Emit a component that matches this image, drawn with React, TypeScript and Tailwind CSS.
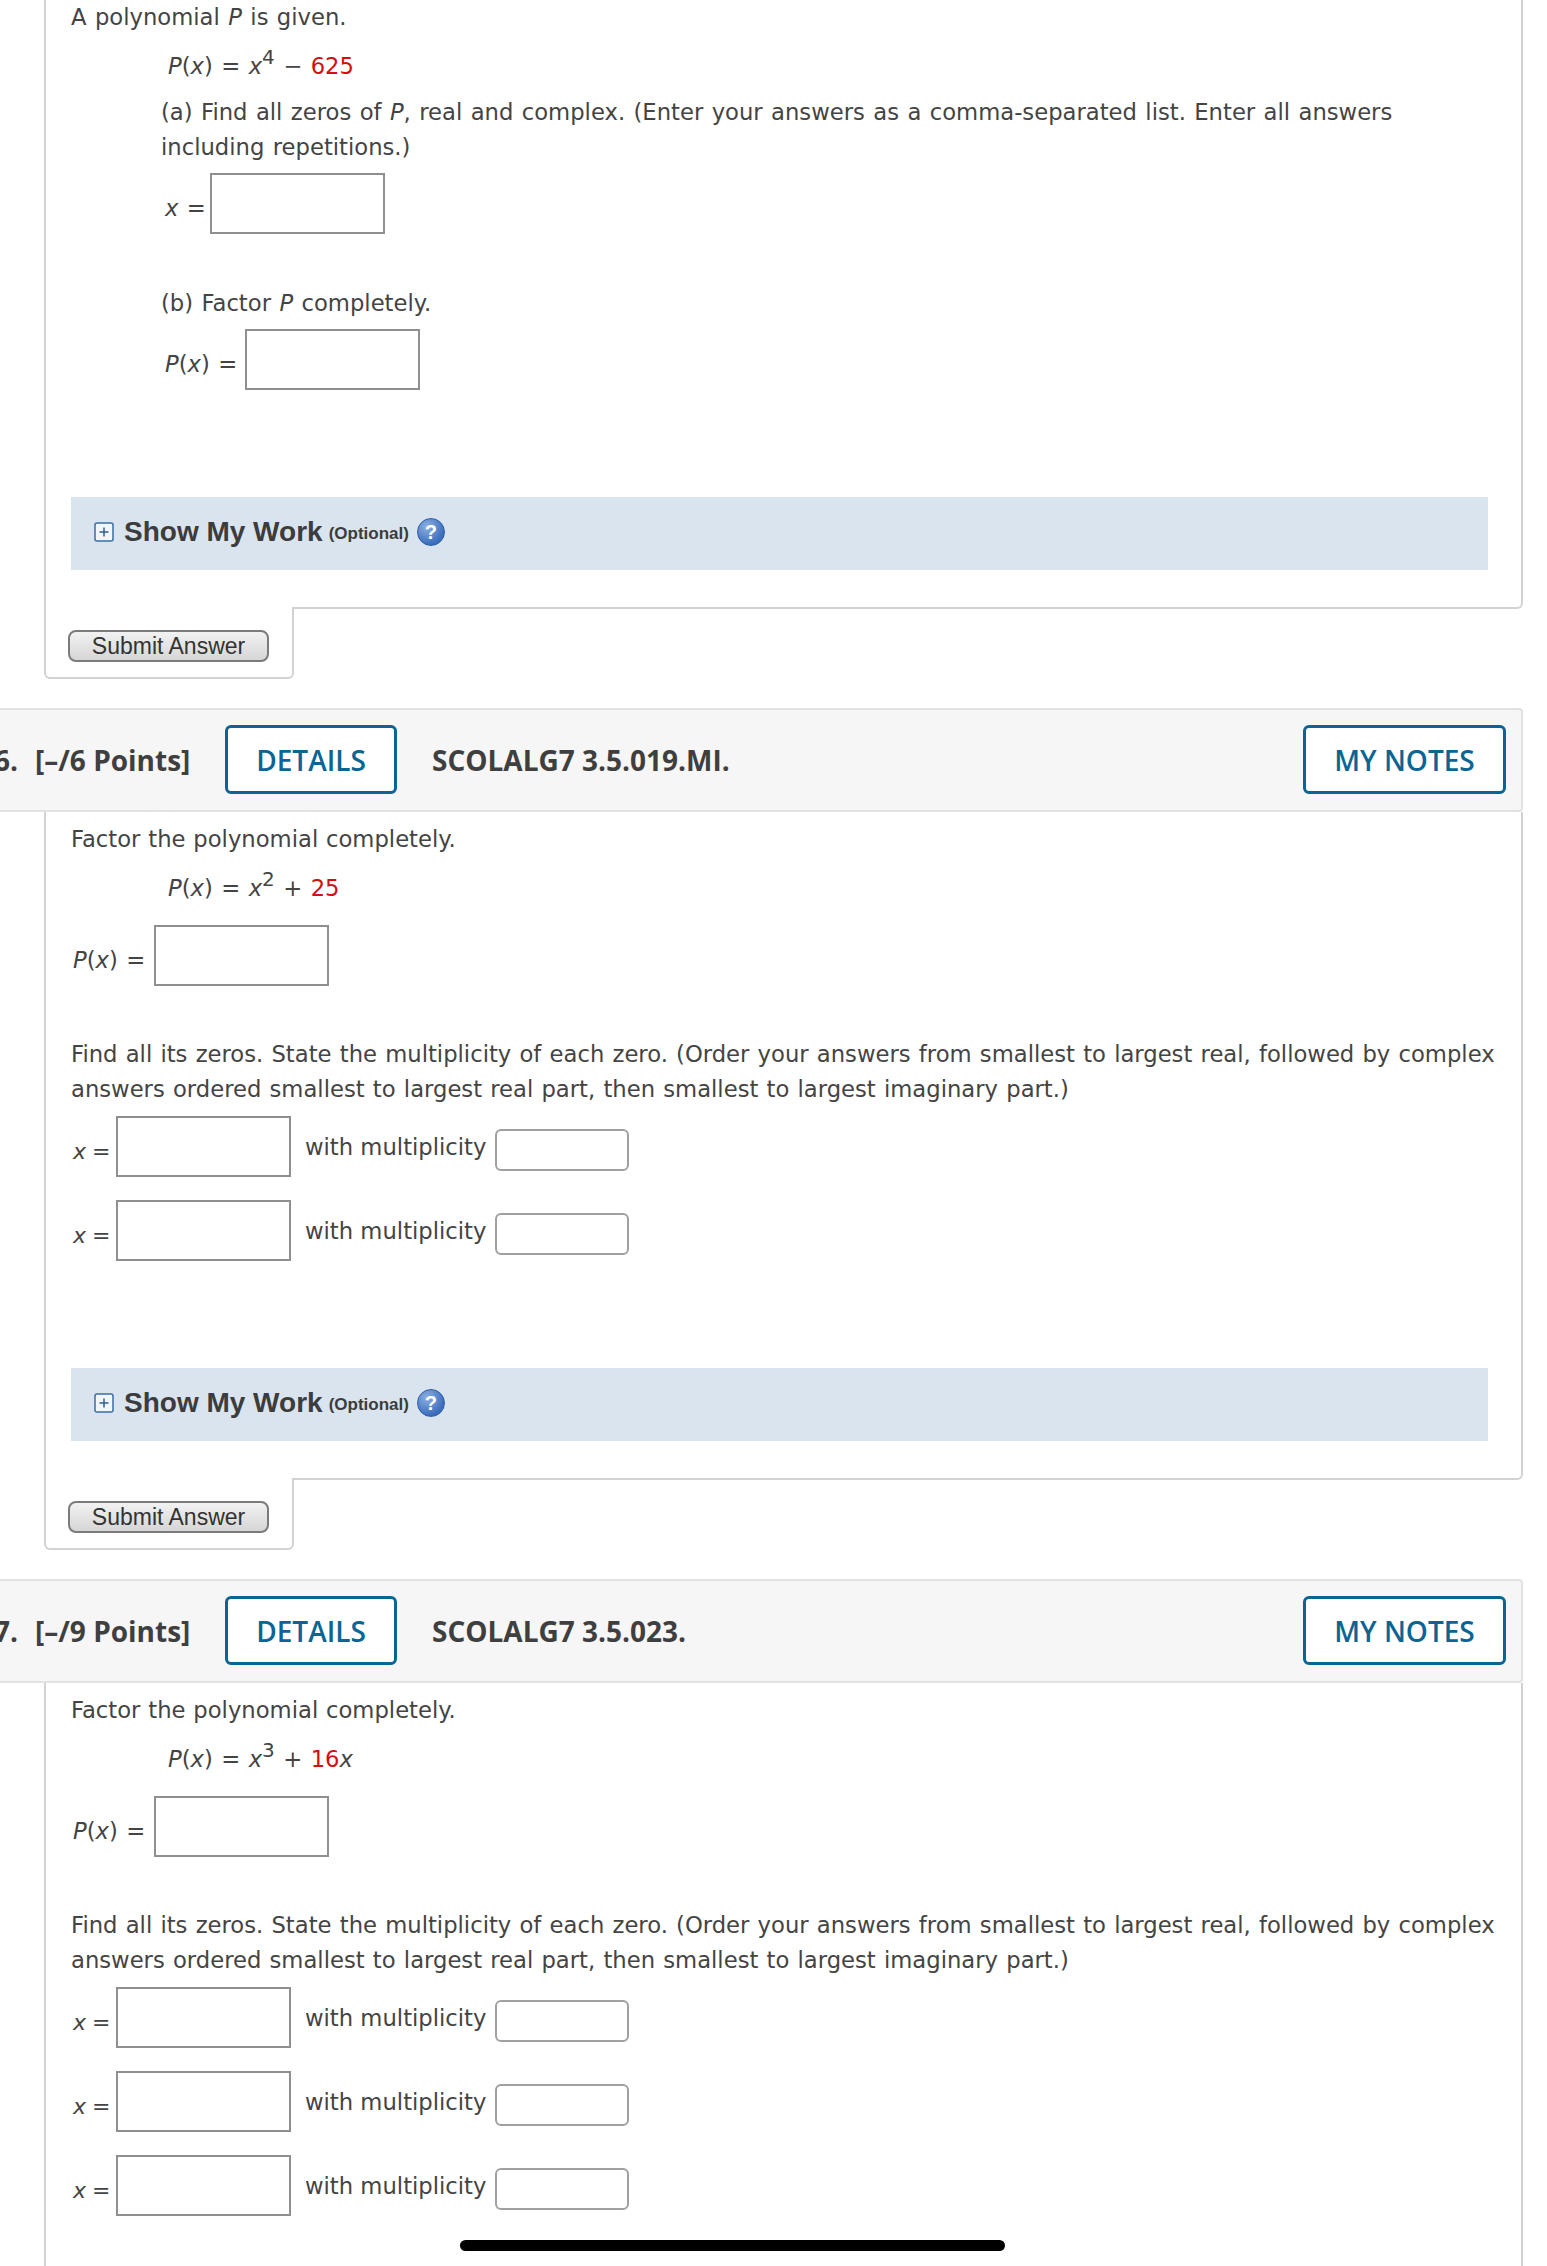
import React from "react";

const P = () => <i>P</i>;
const X = () => <i>x</i>;

function Box({ w = "w-[175px]" }: { w?: string }) {
  return <div className={`${w} h-[61px] shrink-0 border-2 border-[#8f8f8f] bg-white`} />;
}

function Answer({ className, label, w }: { className: string; label: React.ReactNode; w: string }) {
  return (
    <div className={`flex items-start ${className}`}>
      <div className={`${w} pt-[18px] leading-[35px] whitespace-pre`}>{label}</div>
      <Box />
    </div>
  );
}

function Multi({ className }: { className: string }) {
  return (
    <div className={`-ml-[2px] flex items-start ${className}`}>
      <div className="w-[47px] pl-[4px] pt-[18px] text-[22px] leading-[35px] [word-spacing:-1px]"><X /> =</div>
      <Box />
      <div className="ml-[14px] mt-[14px] w-[190px] leading-[35px] [word-spacing:0px]">with multiplicity</div>
      <div className="mt-[13px] h-[42px] w-[134px] rounded-[6px] border-2 border-[#a0a0a0] bg-white" />
    </div>
  );
}

function ShowWork({ className }: { className: string }) {
  return (
    <div className={`flex h-[73px] w-[1417px] items-center bg-[#d9e4ee] pb-[4px] pl-[23px] [word-spacing:0px] ${className}`}>
      <svg width="20" height="20" viewBox="0 0 20 20" className="shrink-0">
        <rect x="1" y="1" width="18" height="18" rx="2" fill="#f2f6fa" stroke="#3b6ea5" strokeWidth="1.5" />
        <path d="M10 5.5v9M5.5 10h9" stroke="#2f5f95" strokeWidth="1.5" />
      </svg>
      <span className="ml-[10px] font-['Liberation_Sans'] text-[28px] font-bold text-[#3c3c3c]">Show My Work</span>
      <span className="ml-[6px] mt-[5px] font-['Liberation_Sans'] text-[17px] font-bold text-[#3c3c3c]">(Optional)</span>
      <span className="ml-[8px] flex h-[28px] w-[28px] items-center justify-center rounded-full border border-[#2f5ea6] bg-[radial-gradient(circle_at_35%_30%,#8fb0e2,#3a6ebd_70%)] font-['Liberation_Sans'] text-[20px] font-bold text-white">?</span>
    </div>
  );
}

function Footer() {
  return (
    <div className="relative -mt-[2px] flex h-[72px] w-[250px] items-start rounded-b-[6px] border-x-2 border-b-2 border-[#d2d2d2] bg-white pl-[22px] pt-[23px]">
      <button className="h-[32px] w-[201px] rounded-[8px] border-2 border-[#7b7b7b] bg-gradient-to-b from-[#f2f2f2] to-[#d6d6d6] font-['Liberation_Sans'] text-[23px] leading-[26px] text-[#333]">
        Submit Answer
      </button>
    </div>
  );
}

function Header({ n, points, code, className }: { n: string; points: string; code: string; className: string }) {
  const btn = "flex h-[69px] items-center justify-center rounded-[6px] border-[3px] border-[#0b6594] bg-white text-[28px] font-semibold text-[#0b6594]";
  return (
    <div className={`flex h-[104px] w-[1523px] items-center rounded-r-[4px] border-y-2 border-r-2 border-[#e2e2e2] bg-[#f6f6f6] pb-[1px] font-['Open_Sans'] text-[#3f3f3f] [word-spacing:0px] ${className}`}>
      <span className="-ml-[6px] w-[41px] shrink-0 text-[28px] font-bold">{n}</span>
      <span className="w-[190px] shrink-0 text-[28px] font-bold">[–/{points} Points]</span>
      <div className={`${btn} w-[172px] shrink-0`}>DETAILS</div>
      <span className="ml-[35px] text-[28px] font-bold">{code}</span>
      <div className={`${btn} ml-auto mr-[15px] w-[203px]`}>MY NOTES</div>
    </div>
  );
}

export default function App() {
  return (
    <div className="relative h-[2266px] w-[1547px] overflow-hidden bg-white font-['DejaVu_Sans'] text-[22.7px] text-[#444] [word-spacing:1.2px]">
      {/* Question 5 */}
      <div className="ml-[44px] h-[609px] w-[1479px] rounded-br-[6px] border-x-2 border-b-2 border-[#d2d2d2] pl-[25px]">
        <p className="leading-[35px]">A polynomial <P /> is given.</p>
        <p className="ml-[97px] mt-[14px] leading-[35px]">
          <P />(<X />) = <X /><sup className="text-[20px] leading-none">4</sup> − <span className="text-[#d30f0f]">625</span>
        </p>
        <p className="ml-[90px] mt-[11px] leading-[35px]">
          (a) Find all zeros of <P />, real and complex. (Enter your answers as a comma-separated list. Enter all answers<br />including repetitions.)
        </p>
        <Answer className="ml-[94px] mt-[8px]" w="w-[45px]" label={<><X /> =</>} />
        <p className="ml-[90px] mt-[52px] leading-[35px]">(b) Factor <P /> completely.</p>
        <Answer className="ml-[94px] mt-[8px]" w="w-[80px]" label={<><P />(<X />) =</>} />
        <ShowWork className="mt-[107px]" />
      </div>
      <div className="ml-[44px]"><Footer /></div>

      {/* Question 6 */}
      <Header n="6." points="6" code="SCOLALG7 3.5.019.MI." className="mt-[29px]" />
      <div className="ml-[44px] h-[668px] w-[1479px] rounded-br-[6px] border-x-2 border-b-2 border-[#d2d2d2] pl-[25px] pt-[10px]">
        <p className="leading-[35px] [word-spacing:0.6px]">Factor the polynomial completely.</p>
        <p className="ml-[97px] mt-[14px] leading-[35px]">
          <P />(<X />) = <X /><sup className="text-[20px] leading-none">2</sup> + <span className="text-[#d30f0f]">25</span>
        </p>
        <Answer className="ml-[2px] mt-[19px]" w="w-[81px]" label={<><P />(<X />) =</>} />
        <p className="mt-[51px] w-[1440px] leading-[35px] [word-spacing:1px]">
          Find all its zeros. State the multiplicity of each zero. (Order your answers from smallest to largest real, followed by complex<br />answers ordered smallest to largest real part, then smallest to largest imaginary part.)
        </p>
        <Multi className="mt-[9px]" />
        <Multi className="mt-[23px]" />
        <ShowWork className="mt-[107px]" />
      </div>
      <div className="ml-[44px]"><Footer /></div>

      {/* Question 7 */}
      <Header n="7." points="9" code="SCOLALG7 3.5.023." className="mt-[29px]" />
      <div className="ml-[44px] h-[700px] w-[1479px] border-x-2 border-[#d2d2d2] pl-[25px] pt-[10px]">
        <p className="leading-[35px] [word-spacing:0.6px]">Factor the polynomial completely.</p>
        <p className="ml-[97px] mt-[14px] leading-[35px]">
          <P />(<X />) = <X /><sup className="text-[20px] leading-none">3</sup> + <span className="text-[#d30f0f]">16</span><X />
        </p>
        <Answer className="ml-[2px] mt-[19px]" w="w-[81px]" label={<><P />(<X />) =</>} />
        <p className="mt-[51px] w-[1440px] leading-[35px] [word-spacing:1px]">
          Find all its zeros. State the multiplicity of each zero. (Order your answers from smallest to largest real, followed by complex<br />answers ordered smallest to largest real part, then smallest to largest imaginary part.)
        </p>
        <Multi className="mt-[9px]" />
        <Multi className="mt-[23px]" />
        <Multi className="mt-[23px]" />
      </div>

      {/* Home indicator overlay */}
      <div className="absolute left-[460px] top-[2240px] h-[11px] w-[545px] rounded-full bg-black" />
    </div>
  );
}
